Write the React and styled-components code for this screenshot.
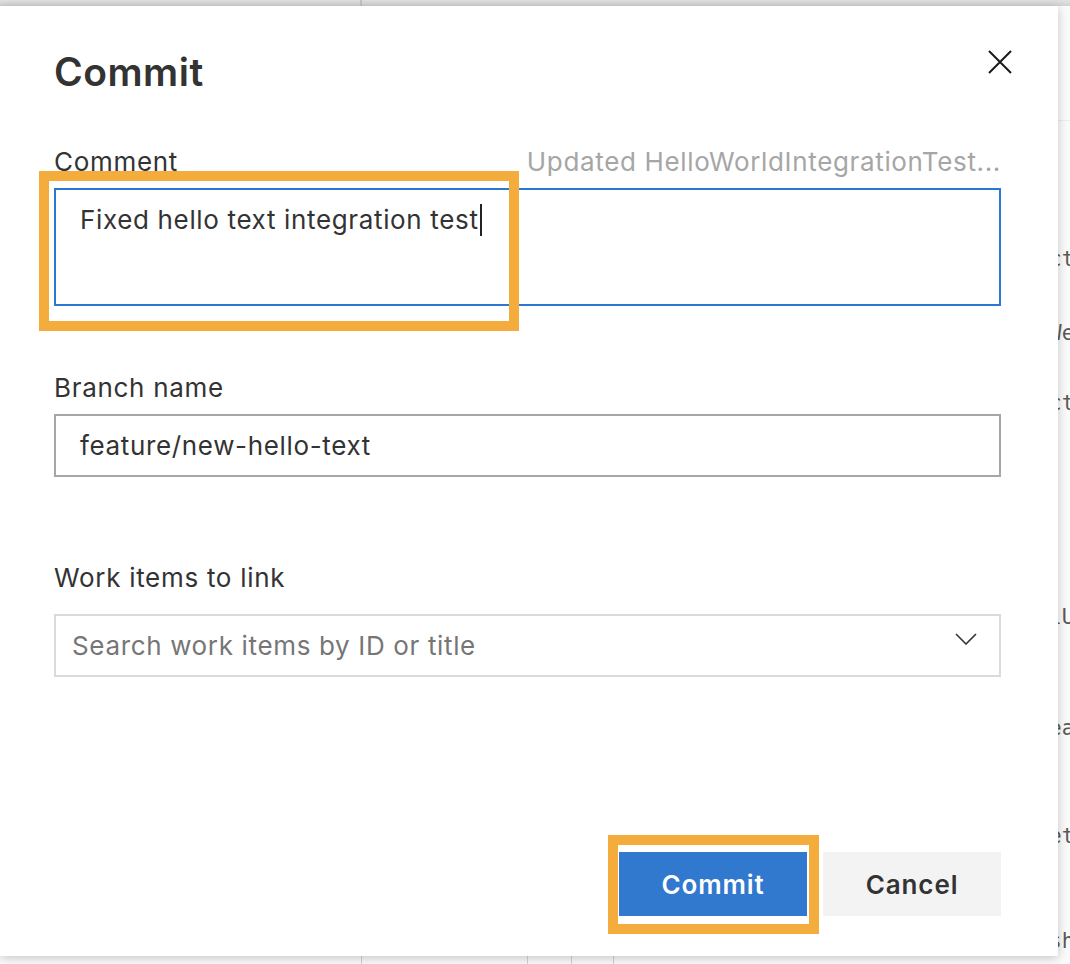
import React from 'react';
import styled, { createGlobalStyle } from 'styled-components';

const GlobalStyle = createGlobalStyle`
  html, body {
    margin: 0;
    padding: 0;
    background: #ffffff;
  }
  body {
    font-family: Inter, "Noto Sans", "Liberation Sans", sans-serif;
    color: #333333;
  }
`;

const Page = styled.div`
  position: relative;
  width: 1070px;
  height: 964px;
  overflow: hidden;
  background: #fbfbfb;
`;

const TopStrip = styled.div`
  height: 6px;
  background: linear-gradient(#e2e2e2, #d2d2d2);
  display: flex;
  padding-left: 360px;
  span {
    width: 2px;
    height: 6px;
    background: #c4c4c4;
  }
`;

const CodeColumn = styled.div`
  display: flex;
  flex-direction: column;
  padding-left: 1049px;
  font-family: "DejaVu Sans Mono", "Liberation Mono", monospace;
  font-size: 21px;
  color: #5a5a5a;
  white-space: nowrap;
`;

const HeaderRule = styled.div`
  margin-top: 114px;
  height: 1px;
  background: #ececec;
`;

const CodeLine = styled.div`
  margin-top: ${p => p.gap}px;
  line-height: 24px;
`;

const BottomCols = styled.div`
  position: absolute;
  left: 0;
  bottom: 0;
  width: 100%;
  height: 10px;
  span {
    position: absolute;
    bottom: 0;
    width: 1px;
    height: 10px;
    background: #d4d4d4;
  }
`;

const Dialog = styled.div`
  position: absolute;
  left: 0;
  top: 6px;
  width: 1058px;
  height: 950px;
  box-sizing: border-box;
  background: #ffffff;
  box-shadow: 0 2px 10px rgba(0, 0, 0, 0.22);
  padding: 42px 57px 40px 54px;
  display: flex;
  flex-direction: column;
`;

const Header = styled.div`
  display: flex;
  align-items: center;
  justify-content: space-between;
  height: 48px;
`;

const Title = styled.h1`
  margin: 0;
  font-size: 39px;
  font-weight: 600;
  line-height: 48px;
  color: #333333;
  letter-spacing: 0.5px;
`;

const CloseButton = styled.button`
  width: 30px;
  height: 30px;
  margin: -20px -14px 0 0;
  padding: 0;
  border: 0;
  background: none;
  display: flex;
  align-items: center;
  justify-content: center;
`;

const Field = styled.div`
  margin-top: ${p => p.top}px;
  display: flex;
  flex-direction: column;
`;

const LabelRow = styled.div`
  display: flex;
  justify-content: space-between;
  align-items: center;
  height: 32px;
  margin-bottom: ${p => p.gap}px;
`;

const Label = styled.label`
  font-size: 26px;
  line-height: 32px;
  letter-spacing: 0.7px;
  color: #333333;
`;

const Hint = styled.span`
  font-size: 26px;
  line-height: 32px;
  letter-spacing: 0.65px;
  color: #a6a6a6;
`;

const Anchor = styled.div`
  position: relative;
  display: flex;
  flex-direction: column;
`;

const Highlight = styled.div`
  position: absolute;
  left: ${p => p.x}px;
  top: ${p => p.y}px;
  width: ${p => p.w}px;
  height: ${p => p.h}px;
  box-sizing: border-box;
  border: 10px solid #f4ac3c;
  pointer-events: none;
`;

const TextBox = styled.div`
  box-sizing: border-box;
  height: ${p => p.h}px;
  border: 2px solid ${p => p.border};
  padding: ${p => (p.multi ? '14px 24px' : '0 24px')};
  display: flex;
  align-items: ${p => (p.multi ? 'flex-start' : 'center')};
  font-size: 26px;
  line-height: 32px;
  letter-spacing: 0.65px;
  color: #333333;
`;

const Caret = styled.span`
  display: inline-block;
  width: 2px;
  height: 32px;
  margin-left: 1px;
  background: #222;
  vertical-align: top;
`;

const SearchBox = styled.div`
  box-sizing: border-box;
  height: 63px;
  border: 2px solid #dadada;
  padding: 0 22px 0 16px;
  display: flex;
  align-items: center;
  justify-content: space-between;
  font-size: 26px;
  letter-spacing: 0.65px;
  color: #767676;
`;

const Chevron = styled.svg`
  margin-top: -14px;
`;

const Footer = styled.div`
  margin-top: auto;
  display: flex;
  justify-content: flex-end;
  gap: 16px;
`;

const Button = styled.button`
  height: 64px;
  width: ${p => p.w}px;
  border: 0;
  padding: 0;
  font-family: inherit;
  font-size: 26px;
  font-weight: 600;
  letter-spacing: 0.9px;
  background: ${p => (p.primary ? '#3079ce' : '#f3f3f3')};
  color: ${p => (p.primary ? '#ffffff' : '#333333')};
`;

const codeLines = [
  { text: 'ct', gap: 126 },
  { text: 'We', gap: 50 },
  { text: 'ct', gap: 46 },
  { text: 'lU', gap: 190 },
  { text: 'ea', gap: 87 },
  { text: 'et', gap: 84 },
  { text: 'sh', gap: 81 },
];

const App = () => (
  <Page>
    <GlobalStyle />
    <TopStrip>
      <span />
    </TopStrip>
    <CodeColumn>
      <HeaderRule />
      {codeLines.map((l, i) => (
        <CodeLine key={i} gap={l.gap}>
          {l.text}
        </CodeLine>
      ))}
    </CodeColumn>
    <BottomCols>
      {[361, 527, 571, 613].map(x => (
        <span key={x} style={{ left: x }} />
      ))}
    </BottomCols>

    <Dialog>
      <Header>
        <Title>Commit</Title>
        <CloseButton aria-label="Close">
          <svg width="26" height="26" viewBox="0 0 26 26">
            <path d="M2 2 L24 24 M24 2 L2 24" stroke="#1a1a1a" strokeWidth="2" fill="none" />
          </svg>
        </CloseButton>
      </Header>

      <Field top={50}>
        <LabelRow gap={10}>
          <Label>Comment</Label>
          <Hint>Updated HelloWorldIntegrationTest...</Hint>
        </LabelRow>
        <Anchor>
          <TextBox multi h={118} border="#2b78d0">
            <span>
              Fixed hello text integration test
              <Caret />
            </span>
          </TextBox>
          <Highlight x={-15} y={-17} w={480} h={160} />
        </Anchor>
      </Field>

      <Field top={66}>
        <LabelRow gap={10}>
          <Label>Branch name</Label>
        </LabelRow>
        <TextBox h={63} border="#a6a6a6">
          feature/new-hello-text
        </TextBox>
      </Field>

      <Field top={85}>
        <LabelRow gap={20}>
          <Label>Work items to link</Label>
        </LabelRow>
        <SearchBox>
          <span>Search work items by ID or title</span>
          <Chevron width="22" height="12" viewBox="0 0 22 12">
            <path d="M1 1 L11 11 L21 1" stroke="#333" strokeWidth="1.6" fill="none" />
          </Chevron>
        </SearchBox>
      </Field>

      <Footer>
        <Anchor>
          <Button primary w={188}>Commit</Button>
          <Highlight x={-11} y={-17} w={211} h={99} />
        </Anchor>
        <Button w={178}>Cancel</Button>
      </Footer>
    </Dialog>
  </Page>
);

export default App;
